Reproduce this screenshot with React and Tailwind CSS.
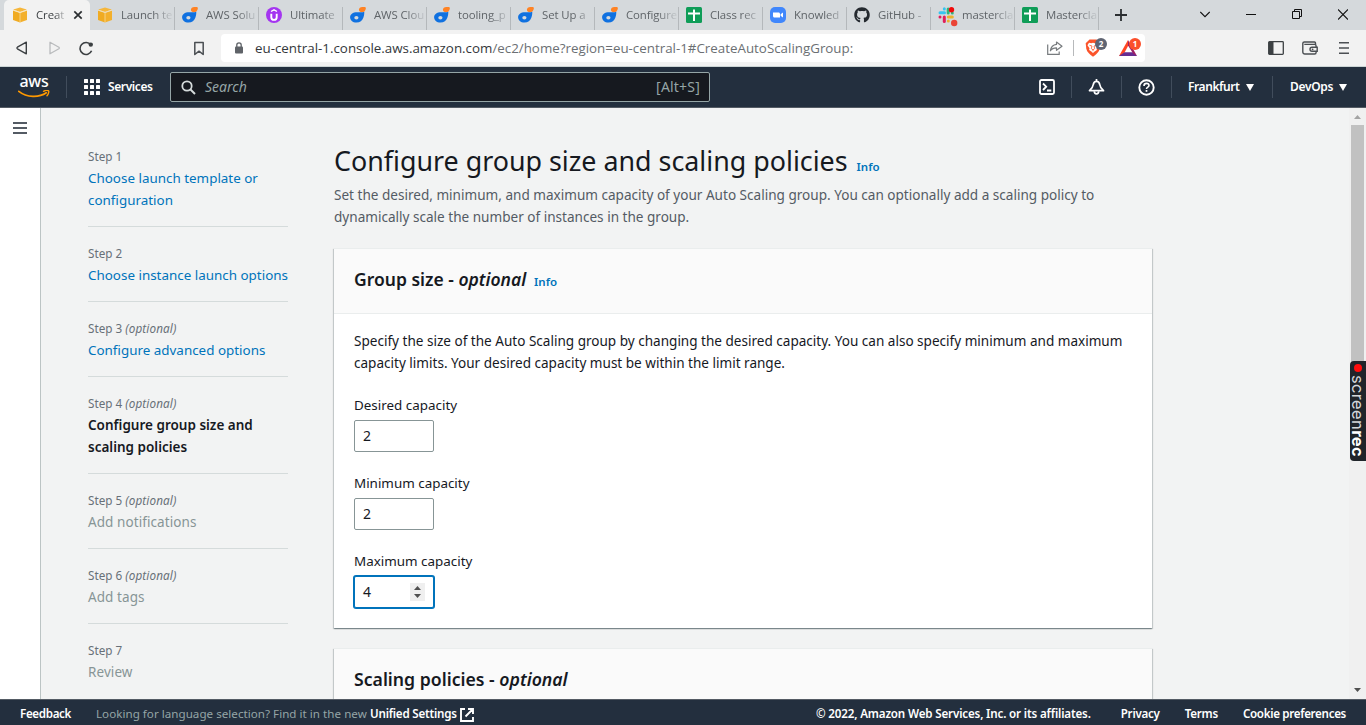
import React from "react";
import { FaGithub } from "react-icons/fa";

function CubeIcon() {
  return (
    <svg width="16" height="16" viewBox="0 0 16 16">
      <path d="M1 3.6 8 6v9.6L1 13z" fill="#f0ab22" />
      <path d="M15 3.6 8 6v9.6l7-2.6z" fill="#f3b02c" />
      <path d="M1.2 2.6 8 .6l6.800 2L8 4.900z" fill="#f6b73c" />
      <path d="M8 5.200v10.400M1 3.200l7 2.100 7-2.100" stroke="#fbe3ad" strokeWidth=".7" fill="none" />
    </svg>
  );
}

function DropIcon() {
  return (
    <svg width="16" height="16" viewBox="0 0 16 16">
      <path d="M7.200 5.200h4.500c1.700 0 2.300-.4 2.500-.8.200 1 .1 3.500-.8 6.100-.9 3-3.400 5.100-7 5.100C2.700 15.600.1 13.300.1 10.300c0-3 2.600-5.100 7.100-5.100z" fill="#1071e0" />
      <ellipse cx="6.400" cy="10.800" rx="2.100" ry="1.700" fill="#d5d9dc" />
      <path d="M12.300 0h2.200c1 0 1.500.7 1.300 1.700-.3 2-1.600 3.400-3.900 3.400-1.700 0-3-.9-3-2.400C8.900 1.200 10.300 0 12.300 0z" fill="#ff8324" />
    </svg>
  );
}

function UltimateIcon() {
  return (
    <svg width="16" height="16" viewBox="0 0 16 16">
      <circle cx="8" cy="8" r="8" fill="#a435f0" />
      <path d="M5.300 6.700v3.500a2.700 2.700 0 0 0 5.400 0V6.700" stroke="#fff" strokeWidth="1.900" fill="none" />
      <path d="m5 4.500 3-1.700 3 1.700" stroke="#fff" strokeWidth="1.400" fill="none" />
    </svg>
  );
}

function SheetIcon() {
  return (
    <svg width="16" height="16" viewBox="0 0 16 16">
      <rect width="16" height="16" rx="1.500" fill="#0f9d58" />
      <path d="M2 6.500h12M8 2.500v11.500" stroke="#fff" strokeWidth="2" />
    </svg>
  );
}

function CameraIcon() {
  return (
    <svg width="16" height="16" viewBox="0 0 16 16">
      <rect width="16" height="16" rx="5" fill="#4087fc" />
      <path d="M3 5.400h5.500c.9 0 1.500.6 1.500 1.500v3.700H4.500C3.600 10.600 3 10 3 9.100zM10.600 7.200 13 5.500v5l-2.400-1.700z" fill="#fff" />
    </svg>
  );
}

function SlackIcon() {
  return (
    <svg width="20" height="20" viewBox="0 0 20 20">
      <g strokeWidth="3" strokeLinecap="round">
        <path d="M2 5.800h4.500" stroke="#36c5f0" />
        <path d="M6.300 1.800v.1" stroke="#36c5f0" />
        <path d="M10.200 2v4" stroke="#2eb67d" />
        <path d="M14.300 6v.1" stroke="#2eb67d" />
        <path d="M10.300 10h4" stroke="#ecb22e" />
        <path d="M10.300 14v.1" stroke="#ecb22e" />
        <path d="M6.300 10v4.500" stroke="#e01e5a" />
        <path d="M2 10v.1" stroke="#e01e5a" />
      </g>
      <circle cx="13.500" cy="2.700" r="2.700" fill="#f10a0a" />
      <circle cx="16.200" cy="16" r="3.200" fill="#ea4335" />
    </svg>
  );
}

const tabs = [
  { icon: <DropIcon />, text: "AWS Solu" },
  { icon: <UltimateIcon />, text: "Ultimate" },
  { icon: <DropIcon />, text: "AWS Clou" },
  { icon: <DropIcon />, text: "tooling_p" },
  { icon: <DropIcon />, text: "Set Up a" },
  { icon: <DropIcon />, text: "Configure" },
  { icon: <SheetIcon />, text: "Class rec" },
  { icon: <CameraIcon />, text: "Knowled" },
  { icon: <FaGithub size={16} color="#24292f" />, text: "GitHub -" },
  { icon: <SlackIcon />, text: "mastercla" },
  { icon: <SheetIcon />, text: "Mastercla" },
];

const fade = "[mask-image:linear-gradient(to_right,black_62%,rgba(0,0,0,0.1))]";

function TabStrip() {
  return (
    <div className="flex h-[30px] bg-[#d5d9dc] pl-1 font-['Open_Sans',sans-serif] text-[11.400px] tracking-[-0.100px] text-[#5f6468]">
      <div className="flex w-[86px] items-center rounded-t-[5px] bg-[#f2f2f2] pl-2 text-[#3c4043]">
        <CubeIcon />
        <span className={`ml-2 w-[30px] overflow-hidden whitespace-nowrap ${fade}`}>Creat</span>
        <svg className="ml-[7px]" width="10" height="10" viewBox="0 0 10 10">
          <path d="m1.300 1.300 7.400 7.400M8.700 1.300 1.300 8.700" stroke="#2b2e31" strokeWidth="1.700" />
        </svg>
      </div>
      <div className="flex w-[85px] items-center pl-[7px]">
        <CubeIcon />
        <span className={`ml-2 w-[51px] overflow-hidden whitespace-nowrap ${fade}`}>Launch te</span>
        <i className="ml-auto mt-[7px] h-[23px] w-px bg-[#b4b8bb]" />
      </div>
      {tabs.map((t, i) => (
        <div key={i} className="flex w-[84px] items-center pl-[7px]">
          <span className="h-4 w-4 shrink-0 overflow-visible">{t.icon}</span>
          <span className={`ml-2 w-[51px] overflow-hidden whitespace-nowrap ${fade}`}>{t.text}</span>
          <i className="ml-auto mt-[7px] h-[23px] w-px bg-[#b4b8bb]" />
        </div>
      ))}
      <svg className="ml-4 mt-[9px]" width="12" height="12" viewBox="0 0 12 12">
        <path d="M6 0v12M0 6h12" stroke="#2b2e31" strokeWidth="1.800" />
      </svg>
      <div className="ml-auto mr-[18px] mt-[9px] flex gap-[36px] text-black">
        <svg width="10" height="11" viewBox="0 0 10 11"><path d="m.3 3 4.700 4.700L9.700 3" stroke="#111" strokeWidth="1.100" fill="none" /></svg>
        <svg width="10" height="11" viewBox="0 0 10 11"><path d="M0 5.500h10" stroke="#111" /></svg>
        <svg width="10" height="11" viewBox="0 0 10 11"><path d="M.5 2.500h7v7h-7zM2.500 2.500v-2h7v7h-2" stroke="#111" fill="none" /></svg>
        <svg width="10" height="11" viewBox="0 0 10 11"><path d="m0 .5 10 10M10 .5l-10 10" stroke="#111" strokeWidth="1.100" /></svg>
      </div>
    </div>
  );
}

function Toolbar() {
  return (
    <div className="flex h-[37px] items-center border-b border-[#ccd5d5] bg-[#f2f2f2] pl-4">
      <svg width="12" height="14" viewBox="0 0 12 14"><path d="M10.300 1.200v11.600L1.400 7.800a1 1 0 0 1 0-1.600z" stroke="#3c4043" strokeWidth="1.400" strokeLinejoin="round" fill="none" /></svg>
      <svg className="ml-[21px]" width="12" height="14" viewBox="0 0 12 14"><path d="M1 1.200v11.600l8.900-5a1 1 0 0 0 0-1.600z" stroke="#b9bbbd" strokeWidth="1.300" strokeLinejoin="round" fill="none" /></svg>
      <svg className="ml-[18px]" width="15" height="15" viewBox="0 0 15 15">
        <path d="M12.600 9.800a6 6 0 1 1-.8-6" stroke="#3c4043" strokeWidth="1.600" fill="none" />
        <circle cx="11.800" cy="3.600" r="2.200" fill="#3c4043" />
      </svg>
      <svg className="ml-[100px]" width="10" height="15" viewBox="0 0 10 15"><path d="M.8 1.500h8.400v12L5 10.200.8 13.500z" stroke="#4b4f53" strokeWidth="1.500" strokeLinejoin="round" fill="none" /></svg>
      <div className="ml-[17px] flex h-7 w-[924px] items-center rounded bg-white pl-[14px]">
        <svg width="8" height="12" viewBox="0 0 8 12">
          <rect y="4.500" width="8" height="7" rx="1" fill="#5f6368" />
          <path d="M1.800 5V3a2.200 2.200 0 0 1 4.400 0v2" stroke="#5f6368" strokeWidth="1.300" fill="none" />
        </svg>
        <span className="ml-3 whitespace-nowrap font-['Open_Sans',sans-serif] text-[13.350px] leading-5 text-[#6b6f73]">
          <span className="text-[#33373b]">eu-central-1.console.aws.amazon.com</span>/ec2/home?region=eu-central-1#CreateAutoScalingGroup:
        </span>
        <svg className="ml-auto" width="16" height="14" viewBox="0 0 16 14">
          <path d="M.7 3.500v9.800h11.500V10.500" stroke="#777b7e" strokeWidth="1.200" fill="none" />
          <path d="M9.500 1 15 5.200 9.500 9.300V6.800c-2.800 0-4.800.9-6.100 3 .5-3.500 2.400-6 6.100-6.400z" stroke="#777b7e" strokeWidth="1.200" strokeLinejoin="round" fill="none" />
        </svg>
        <i className="ml-[10px] h-4 w-px bg-[#b7b9bb]" />
        <div className="relative ml-[11px] h-[18px] w-[17px]">
          <svg width="16" height="18" viewBox="0 0 16 18">
            <path d="M4.500.5h7l3.800 3.700-.6 5.500c-.7 3-2.700 5.300-6.700 8-4-2.700-6-5-6.700-8L.7 4.200z" fill="#fb542b" />
            <path d="m4 3.800 2.300.5L8 3.800l1.700.5 2.300-.5 1.500 2.400-2 3 .4 1.800-2.600 1.700L8 14l-1.300-1.300-2.600-1.700.4-1.800-2-3z" fill="#fff" />
            <path d="M4.500 6.300 7 7l-.7 2.600L8 10.800l1.700-1.200L9 7l2.500-.7M8 10.500v1.700" stroke="#fb542b" strokeWidth=".8" fill="none" />
          </svg>
          <b className="absolute -top-[1px] left-[10px] flex h-3 w-3 items-center justify-center rounded-full bg-[#5f6472] font-['Open_Sans',sans-serif] text-[8px] leading-3 text-white">2</b>
        </div>
        <div className="relative ml-[17px] mr-[6px] h-[18px] w-[20px]">
          <svg width="18" height="18" viewBox="0 0 18 18">
            <path d="M9 1 0 17h3.700L9 7z" fill="#ff4724" />
            <path d="M0 17h18l-3.500-3.700H5.500z" fill="#662d91" />
            <path d="m9 1 9 16-3.900-2.500L9 6.500z" fill="#9e1f63" />
          </svg>
          <b className="absolute -top-[1px] left-[10px] flex h-3 w-3 items-center justify-center rounded-full bg-[#fb4f2b] font-['Open_Sans',sans-serif] text-[8px] leading-3 text-white">1</b>
        </div>
      </div>
      <div className="ml-auto mr-[17px] flex items-center gap-[18px]">
        <svg width="16" height="14" viewBox="0 0 16 14"><rect x=".7" y=".7" width="14.600" height="12.600" rx=".8" stroke="#3c4043" strokeWidth="1.300" fill="none" /><path d="M1 1h4.500v12H1z" fill="#3c4043" /></svg>
        <svg width="16" height="14" viewBox="0 0 16 14">
          <path d="M13.500 3.300V2a1 1 0 0 0-1-1H2.300A1.500 1.500 0 0 0 .8 2.400V11a2 2 0 0 0 2 2h9.800a1.500 1.500 0 0 0 1.500-1.500V4.900a1.500 1.500 0 0 0-1.500-1.500H2.300" stroke="#4b4f53" strokeWidth="1.400" fill="none" />
          <path d="M15.200 6.300H10a2 2 0 0 0 0 4h5.200z" stroke="#4b4f53" strokeWidth="1.400" fill="#f2f2f2" />
          <circle cx="10.600" cy="8.300" r=".9" fill="#4b4f53" />
        </svg>
        <svg className="ml-[3px]" width="10" height="14" viewBox="0 0 10 14"><path d="M0 1.800h10M0 7h10M0 12.200h10" stroke="#4b4f53" strokeWidth="1.500" /></svg>
      </div>
    </div>
  );
}

function Divider() {
  return <i className="h-[22px] w-px bg-[#414d5c]" />;
}

function ConsoleHeader() {
  return (
    <header className="flex h-[41px] items-center border-b border-[#545b64] bg-[#232f3e] pl-[18px] text-white">
      <div className="flex w-[32px] flex-col items-center">
        <span className="h-[13px] font-['Noto_Sans',sans-serif] text-[16px] font-medium leading-[9px] tracking-[-0.3px]">aws</span>
        <svg width="32" height="8" viewBox="0 0 32 8">
          <path d="M.8 1.300C9 7.800 21 7.800 28.300 2.800" stroke="#f90" strokeWidth="1.700" fill="none" strokeLinecap="round" />
          <path d="M25.500 1.300c2-.9 4.600-.9 5.200-.3.400.7-.3 3.300-1.700 4.800" stroke="#f90" strokeWidth="1.400" fill="none" strokeLinecap="round" />
        </svg>
      </div>
      <i className="ml-4 h-[22px] w-px bg-[#414d5c]" />
      <svg className="ml-[17px]" width="16" height="16" viewBox="0 0 16 16" fill="#fff">
        {[0, 6, 12].map((y) => [0, 6, 12].map((x) => <rect key={`${x}${y}`} x={x} y={y} width="4" height="4" rx=".5" />))}
      </svg>
      <span className="ml-2 w-[46px] whitespace-nowrap text-[12px] font-semibold tracking-[-0.400px]">Services</span>
      <div className="ml-4 flex h-[30px] w-[540px] items-center rounded-[2px] border border-[#95a5a6] bg-[#16191f] pl-[10px] pr-[9px] text-[14px] text-[#95a5a6]">
        <svg width="15" height="15" viewBox="0 0 15 15"><circle cx="6" cy="6" r="4.700" stroke="#d5dbdb" strokeWidth="1.800" fill="none" /><path d="m9.500 9.500 4.500 4.500" stroke="#d5dbdb" strokeWidth="1.900" /></svg>
        <span className="-mt-px ml-[9px] italic">Search</span>
        <span className="-mt-px ml-auto tracking-[0.2px]">[Alt+S]</span>
      </div>
      <div className="ml-auto flex items-center">
        <svg width="16" height="16" viewBox="0 0 16 16" stroke="#fff" strokeWidth="1.800" fill="none"><rect x="1" y="1" width="14" height="14" rx="1.500" /><path d="m4 4.500 3.200 3.200L4 11M8 11.500h4.300" /></svg>
        <div className="mx-4 flex"><Divider /></div>
        <svg width="17" height="16" viewBox="0 0 17 16" stroke="#fff" strokeWidth="1.700" fill="none" strokeLinejoin="round"><path d="M8.500 2.300c-1.900 0-2.900 1.300-3.200 3.200C5 8 4.200 9.300 1.500 11.700h14c-2.700-2.400-3.500-3.700-3.800-6.200-.3-1.900-1.300-3.200-3.200-3.200zM8.500 2.400V0" /><path d="M6.300 12.200c0 3.500 4.400 3.500 4.400 0" /></svg>
        <div className="ml-4 mr-4 flex"><Divider /></div>
        <svg width="17" height="17" viewBox="0 0 17 17" stroke="#fff" strokeWidth="1.900" fill="none"><circle cx="8.500" cy="8.500" r="7.200" /><path d="M6 6.900c0-1.600 1.100-2.500 2.500-2.500s2.500.9 2.500 2.200c0 1.600-2.500 1.600-2.500 3.400" strokeWidth="1.600" /><path d="M8.500 11v1.800" strokeWidth="1.700" /></svg>
        <div className="mx-4 flex"><Divider /></div>
        <span className="w-[52px] whitespace-nowrap text-[12px] font-semibold tracking-[-0.420px]">Frankfurt</span>
        <svg className="ml-[6px]" width="8" height="7" viewBox="0 0 8 7"><path d="M0 0h8L4 7z" fill="#fff" /></svg>
        <div className="ml-[18px] mr-[17px] flex"><Divider /></div>
        <span className="w-[43px] whitespace-nowrap text-[12px] font-semibold tracking-[-0.300px]">DevOps</span>
        <svg className="ml-[6px] mr-[19px]" width="8" height="7" viewBox="0 0 8 7"><path d="M0 0h8L4 7z" fill="#fff" /></svg>
      </div>
    </header>
  );
}

const steps = [
  { n: 1, label: "Choose launch template or configuration", kind: "link" },
  { n: 2, label: "Choose instance launch options", kind: "link" },
  { n: 3, optional: true, label: "Configure advanced options", kind: "link" },
  { n: 4, optional: true, label: "Configure group size and scaling policies", kind: "current" },
  { n: 5, optional: true, label: "Add notifications", kind: "off" },
  { n: 6, optional: true, label: "Add tags", kind: "off" },
  { n: 7, label: "Review", kind: "off" },
];
const stepStyle = {
  link: "text-[13.420px] text-[#0073bb]",
  current: "text-[13.500px] font-semibold text-[#16191f]",
  off: "text-[13.500px] tracking-[0.080px] text-[#879596]",
};

function Steps() {
  return (
    <nav className="ml-[47px] w-[200px] shrink-0 pt-[22px]">
      {steps.map((s) => (
        <div key={s.n} className="border-b border-[#d5dbdb] pb-[15px] pt-4 last:border-0">
          <div className="mb-px h-5 text-[11.700px] leading-5 text-[#687078]">
            Step {s.n} {s.optional && <em className="tracking-[0.120px]">(optional)</em>}
          </div>
          <div className={`-mr-2 leading-[22px] ${stepStyle[s.kind]} ${s.n === 1 || s.n === 4 ? "pr-6" : "whitespace-nowrap"}`}>{s.label}</div>
        </div>
      ))}
    </nav>
  );
}

function Field({ label, value, focused }) {
  return (
    <div className="mb-5">
      <div className="text-[13.420px] leading-[22px]">{label}</div>
      <div className={`mt-1 flex h-8 w-20 items-center justify-between rounded-[2px] border bg-white pl-2 pr-2 text-[14px] ${focused ? "border-[#0073bb] shadow-[0_0_0_1px_#0073bb]" : "border-[#879596]"}`}>
        <span className="-mt-[2px]">{value}</span>
        {focused && (
          <span className="flex h-[18px] w-[15px] items-center justify-center bg-[#efefef]">
            <svg width="7" height="12" viewBox="0 0 7 12" fill="#505050"><path d="M0 4h7L3.500 0zM0 8h7l-3.500 4z" /></svg>
          </span>
        )}
      </div>
    </div>
  );
}

const card = "border-t border-[#eaeded] bg-white shadow-[0_1px_1px_0_rgba(0,28,36,0.3),1px_1px_1px_0_rgba(0,28,36,0.15),-1px_1px_1px_0_rgba(0,28,36,0.15)]";

function Main() {
  return (
    <main className="ml-[46px] w-[818px] shrink-0 pt-[36px] text-[#16191f]">
      <h1 className="flex h-[34px] items-baseline whitespace-nowrap text-[26.840px] leading-[34px]">
        Configure group size and scaling policies
        <span className="ml-[9px] text-[11.500px] font-semibold text-[#0073bb]">Info</span>
      </h1>
      <p className="mt-[6px] whitespace-nowrap text-[13.570px] leading-[22px] text-[#545b64]">
        Set the desired, minimum, and maximum capacity of your Auto Scaling group. You can optionally add a scaling policy to
        <br />
        dynamically scale the number of instances in the group.
      </p>
      <section className={`mt-5 h-[380px] ${card}`}>
        <h2 className="flex h-[65px] items-baseline whitespace-nowrap border-b border-[#eaeded] bg-[#fafafa] pl-5 pt-[19px] text-[17.500px] font-semibold leading-[22px]">
          <span>Group size - <em>optional</em></span>
          <span className="ml-2 text-[11.500px] text-[#0073bb]">Info</span>
        </h2>
        <div className="pl-5 pt-4">
          <p className="mb-5 whitespace-nowrap text-[13.560px] leading-[22px]">
            Specify the size of the Auto Scaling group by changing the desired capacity. You can also specify minimum and maximum
            <br />
            capacity limits. Your desired capacity must be within the limit range.
          </p>
          <Field label="Desired capacity" value="2" />
          <Field label="Minimum capacity" value="2" />
          <Field label="Maximum capacity" value="4" focused />
        </div>
      </section>
      <section className={`mt-5 h-[380px] ${card}`}>
        <h2 className="h-[65px] whitespace-nowrap bg-[#fafafa] pl-5 pt-[19px] text-[17.650px] font-semibold leading-[22px]">
          Scaling policies - <em>optional</em>
        </h2>
      </section>
    </main>
  );
}

function Footer() {
  return (
    <footer className="flex h-[26px] items-center whitespace-nowrap border-t border-[#545b64] bg-[#232f3e] pl-5 pr-5 pt-[2px] text-[11.600px] font-semibold leading-5 text-white">
      <span className="w-[52px] tracking-[-0.330px]">Feedback</span>
      <span className="ml-6 w-[274px] font-normal tracking-[0.030px] text-[#95a5a6]">Looking for language selection? Find it in the new</span>
      <span className="tracking-[-0.210px]">Unified Settings</span>
      <svg className="ml-[3px] mt-[2px]" width="14" height="14" viewBox="0 0 14 14" stroke="#fff" strokeWidth="1.900" fill="none"><path d="M5 1H1v12h12V9M8 1h5v5M13 1 5.500 8.500" /></svg>
      <span className="ml-auto tracking-[-0.150px]">© 2022, Amazon Web Services, Inc. or its affiliates.</span>
      <span className="ml-[30px] tracking-[-0.250px]">Privacy</span>
      <span className="ml-[25px] tracking-[-0.250px]">Terms</span>
      <span className="ml-[25px] tracking-[-0.320px]">Cookie preferences</span>
    </footer>
  );
}

export default function App() {
  return (
    <div className="relative flex h-[725px] w-[1366px] flex-col overflow-hidden bg-[#f2f3f3] font-['Noto_Sans',sans-serif]">
      <TabStrip />
      <Toolbar />
      <ConsoleHeader />
      <div className="flex h-[591px] overflow-hidden">
        <aside className="w-[41px] shrink-0 border-r border-[#bcc4c4] bg-white pl-[13px] pt-[14px]">
          <svg width="14" height="12" viewBox="0 0 14 12"><path d="M0 1h14M0 6h14M0 11h14" stroke="#545b64" strokeWidth="2" /></svg>
        </aside>
        <Steps />
        <Main />
        <div className="ml-auto flex w-[17px] flex-col items-center bg-[#f0f0f0] pt-[7px]">
          <svg width="7" height="4" viewBox="0 0 7 4"><path d="M0 4h7L3.500 0z" fill="#a3a3a3" /></svg>
          <div className="mt-[6px] h-[250px] w-[13px] bg-[#c1c1c1]" />
          <svg className="mb-[7px] mt-auto" width="7" height="4" viewBox="0 0 7 4"><path d="M0 0h7L3.500 4z" fill="#505050" /></svg>
        </div>
      </div>
      <Footer />
      <div className="absolute right-0 top-[361px] flex h-[100px] w-4 flex-col items-center rounded-l-[4px] bg-[#20242a] pt-[3px]">
        <i className="h-2 w-2 shrink-0 rounded-full bg-[#ff0d0d]" />
        <span className="mt-[3px] whitespace-nowrap font-['Inter',sans-serif] text-[16.500px] leading-4 tracking-[0.350px] text-[#d5d7d9] [writing-mode:vertical-rl]">
          screen<b className="text-white">rec</b>
        </span>
      </div>
    </div>
  );
}
